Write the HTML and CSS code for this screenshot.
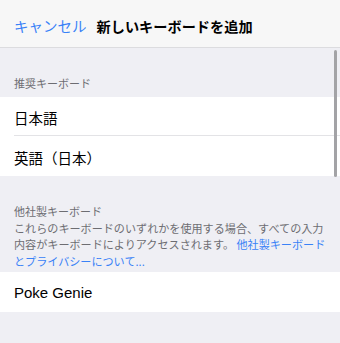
FILE: index.html
```html
<!DOCTYPE html>
<html lang="ja">
<head>
<meta charset="utf-8">
<link rel="stylesheet" href="styles.css">
</head>
<body>
<div class="screen">
  <header class="nav">
    <span class="cancel">キャンセル</span>
    <span class="title">新しいキーボードを追加</span>
  </header>
  <div class="content">
    <div class="section-head first">推奨キーボード</div>
    <div class="group">
      <div class="row"><span>日本語</span></div>
      <div class="row"><span>英語（日本）</span></div>
    </div>
    <div class="section-head third">
      <div>他社製キーボード</div>
      <div class="desc">これらのキーボードのいずれかを使用する場合、すべての入力<br>内容がキーボードによりアクセスされます。 <span class="link">他社製キーボード<br>とプライバシーについて...</span></div>
    </div>
    <div class="group">
      <div class="row latin"><span>Poke Genie</span></div>
    </div>
    <div class="scrollbar"></div>
  </div>
</div>
</body>
</html>
```
FILE: styles.css
```css
html, body {
  margin: 0;
  padding: 0;
}
body {
  width: 340px;
  height: 343px;
  overflow: hidden;
  background: #efeff4;
  font-family: "Noto Sans CJK JP", "Liberation Sans", sans-serif;
}
.screen {
  width: 340px;
  height: 343px;
  display: flex;
  flex-direction: column;
}
.nav {
  height: 48px;
  box-sizing: border-box;
  background: #f7f7f7;
  border-bottom: 1px solid #dcdcdf;
  display: flex;
  align-items: center;
  padding: 4px 0 0 14px;
  gap: 10px;
}
.cancel {
  color: #3a82f7;
  font-size: 14.5px;
}
.title {
  color: #000;
  font-size: 14.2px;
  font-weight: bold;
}
.content {
  position: relative;
  flex: 1;
}
.section-head {
  color: #6d6d72;
  font-size: 11px;
  padding: 0 14px;
}
.section-head.first {
  height: 49px;
  box-sizing: border-box;
  padding-top: 27px;
  line-height: 16px;
}
.section-head.third {
  box-sizing: border-box;
  height: 96px;
  padding-top: 27px;
  line-height: 16.5px;
}
.desc {
  font-size: 11.1px;
  white-space: nowrap;
}
.link {
  color: #3a82f7;
}
.group {
  background: #fff;
}
.row {
  height: 39px;
  display: flex;
  align-items: center;
  padding-top: 2px;
  box-sizing: border-box;
  margin-left: 14px;
  font-size: 14.5px;
  color: #000;
  border-bottom: 1px solid #e3e3e6;
}
.row:last-child {
  border-bottom: none;
  height: 40px;
}
.row.latin {
  font-family: "Liberation Sans", sans-serif;
  font-size: 15px;
  padding-top: 0;
}
.scrollbar {
  position: absolute;
  left: 334px;
  top: 2px;
  width: 3px;
  height: 127px;
  border-radius: 2px;
  background: #a3a3a6;
}
```
